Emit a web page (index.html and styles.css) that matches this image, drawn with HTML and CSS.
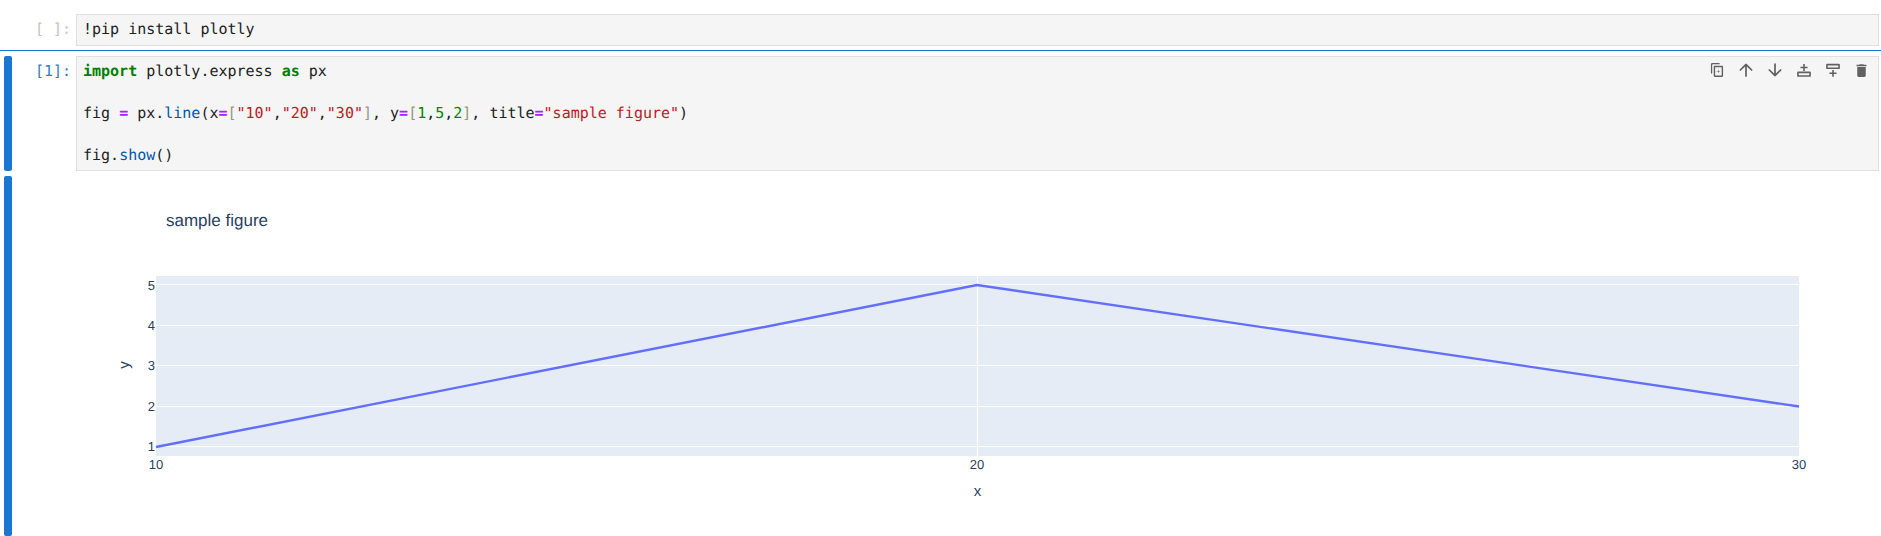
FILE: index.html
```html
<!DOCTYPE html>
<html lang="en">
<head>
    <meta charset="UTF-8">
    <title>Notebook</title>
    <link rel="stylesheet" href="styles.css">
</head>
<body>
    <div class="notebook">
        <div class="cell first-cell">
            <div class="collapser"></div>
            <div class="prompt">[ ]:</div>
            <div class="editor">
                <pre class="code">!pip install plotly</pre>
            </div>
        </div>

        <div class="cell active-cell">
            <div class="collapser on"></div>
            <div class="prompt">[1]:</div>
            <div class="editor">
                <pre class="code"><span class="kw">import</span> plotly.express <span class="kw">as</span> px

fig <span class="op">=</span> px.<span class="fn">line</span>(x<span class="op">=</span><span class="br">[</span><span class="str">"10"</span>,<span class="str">"20"</span>,<span class="str">"30"</span><span class="br">]</span>, y<span class="op">=</span><span class="br">[</span><span class="num">1</span>,<span class="num">5</span>,<span class="num">2</span><span class="br">]</span>, title<span class="op">=</span><span class="str">"sample figure"</span>)

fig.<span class="fn">show</span>()</pre>
                <div class="cell-toolbar">
                    <!-- duplicate -->
                    <span class="tool"><svg viewBox="0 0 14 14" width="16" height="16"><path fill-rule="evenodd" d="M2.8.875h6.1c.3 0 .55.26.55.59s-.25.59-.55.59H3.35c-.3 0-.55.26-.55.59v7.04c0 .32-.25.59-.55.59s-.56-.27-.56-.59V2.05C1.69 1.4 2.19.875 2.8.875ZM5.37 11.9V4.55h5.71v7.35H5.37ZM4.14 4.14c0-.45.37-.82.82-.82h6.53c.45 0 .82.37.82.82v8.17c0 .45-.37.82-.82.82H4.96c-.45 0-.82-.37-.82-.82V4.14Z"/><path d="M9.44 8.27H8.36v1.07c0 .12-.09.21-.21.21s-.21-.09-.21-.21V8.27H6.86c-.11 0-.21-.1-.21-.22s.1-.21.21-.21h1.08V6.77c0-.12.09-.22.21-.22s.21.1.21.22v1.07h1.08c.11 0 .21.09.21.21s-.1.22-.21.22Z"/></svg></span>
                    <!-- move up -->
                    <span class="tool"><svg viewBox="0 0 14 14" width="16" height="16"><path d="M1.53 6.47a.75.75 0 0 0 0 1.06.75.75 0 0 0 1.06 0L6.25 3.87v8.38a.75.75 0 0 0 1.5 0V3.87l3.65 3.66a.75.75 0 0 0 1.07 0 .75.75 0 0 0 0-1.06L7.71 1.71a1 1 0 0 0-1.42 0L1.53 6.47Z"/></svg></span>
                    <!-- move down -->
                    <span class="tool"><svg viewBox="0 0 14 14" width="16" height="16"><path d="M12.47 7.53a.75.75 0 0 0 0-1.06.75.75 0 0 0-1.06 0L7.75 10.13V1.75a.75.75 0 0 0-1.5 0v8.38L2.6 6.47a.75.75 0 0 0-1.07 0 .75.75 0 0 0 0 1.06l4.76 4.76a1 1 0 0 0 1.42 0l4.76-4.76Z"/></svg></span>
                    <!-- insert above -->
                    <span class="tool"><svg viewBox="0 0 14 14" width="16" height="16"><path fill-rule="evenodd" d="M6.3 1.8h1.4v2.300h2.400v1.400H7.700v2.300H6.300V5.500H3.900V4.100h2.400ZM1.800 8.400h10.400a.8.8 0 0 1 .8.8v3a.8.8 0 0 1-.8.8H1.800a.8.8 0 0 1-.8-.8v-3a.8.8 0 0 1 .8-.8Zm.6 1.400v1.800h9.200V9.800Z"/></svg></span>
                    <!-- insert below -->
                    <span class="tool"><svg viewBox="0 0 14 14" width="16" height="16"><path fill-rule="evenodd" d="M1.800 1.600h10.400a.8.8 0 0 1 .8.8v3a.8.8 0 0 1-.8.8H1.800a.8.8 0 0 1-.8-.8v-3a.8.8 0 0 1 .8-.8Zm.6 1.400v1.800h9.200V3ZM6.300 7h1.400v2.100h2.400v1.400H7.700v2.300H6.300v-2.300H3.900V9.100h2.400Z"/></svg></span>
                    <!-- delete -->
                    <span class="tool"><svg viewBox="0 0 24 24" width="17" height="17"><path d="M19 4h-3.500l-1-1h-5l-1 1H5v2h14V4ZM6 19a2 2 0 0 0 2 2h8a2 2 0 0 0 2-2V7H6v12Z"/></svg></span>
                </div>
            </div>
        </div>

        <div class="cell output-cell">
            <div class="collapser on"></div>
            <div class="output">
                <!-- viewBox uses page coordinates so the numbers read off the screen directly -->
                <svg class="chart" viewBox="76 176 1805 360" width="1805" height="360">
                    <rect class="plot-bg" x="156" y="276" width="1643" height="180"/>
                    <path class="grid" d="M156 284.500H1799M156 325.500H1799M156 365.500H1799M156 406.500H1799M156 446.500H1799M977.500 276V456"/>
                    <polyline class="trace" points="156,447 977,285 1799,406.500"/>
                    <text class="title" x="166" y="226">sample figure</text>
                    <g class="ytick">
                        <text x="155" y="289.500">5</text>
                        <text x="155" y="330">4</text>
                        <text x="155" y="370">3</text>
                        <text x="155" y="411">2</text>
                        <text x="155" y="451">1</text>
                    </g>
                    <g class="xtick">
                        <text x="156" y="469">10</text>
                        <text x="977" y="469">20</text>
                        <text x="1799" y="469">30</text>
                    </g>
                    <text class="axis-title" x="977.500" y="496">x</text>
                    <text class="axis-title" transform="translate(129 365) rotate(-90)">y</text>
                </svg>
            </div>
        </div>
    </div>
</body>
</html>
```

FILE: styles.css
```css
html, body {
    margin: 0;
    height: 100%;
    background: #ffffff;
    overflow: hidden;
    text-rendering: geometricPrecision; /* softer glyphs, closer to the reference */
}

.notebook {
    display: flex;
    flex-direction: column;
    height: 536px;
    padding-right: 2px;
    box-sizing: border-box;
}

/* --- Cells --- */
.cell {
    display: flex;
    align-items: stretch;
}

.first-cell {
    padding: 14px 0 4px;
}

.first-cell .editor {
    padding-bottom: 5px;
}

.active-cell {
    /* the blue rule runs the full width of the window */
    margin-right: -2px;
    padding: 5px 2px 5px 0;
    border-top: 1px solid #1976d2;
}

.output-cell {
    flex: 1;
    min-height: 0;
}

.collapser {
    flex: none;
    width: 8px;
    margin-left: 4px;
    border-radius: 2px;
}

.collapser.on {
    background: #1976d2;
}

.prompt {
    flex: none;
    width: 59px;
    padding: 5px 5px 0 0;
    text-align: right;
    font: 15px/21px "DejaVu Sans Mono", monospace;
    color: #c4c4c4;
}

.active-cell .prompt {
    color: #307fc1;
}

/* --- Editor --- */
.editor {
    position: relative;
    flex: 1;
    min-width: 0;
    padding: 4px 6px;
    background: #f5f5f5;
    border: 1px solid #e0e0e0;
}

.code {
    margin: 0;
    font: 15px/21px "DejaVu Sans Mono", monospace;
    color: #212121;
}

.kw { color: #008000; font-weight: bold; }
.op { color: #aa22ff; font-weight: bold; }
.fn { color: #0055aa; }
.str { color: #ba2121; }
.num { color: #008800; }
.br { color: #999977; }

.cell-toolbar {
    position: absolute;
    top: 4px;
    right: 2px;
    display: flex;
}

.tool {
    display: flex;
    justify-content: center;
    align-items: center;
    width: 29px;
    height: 18px;
}

.tool svg {
    fill: #616161;
}

/* --- Plot output --- */
.output {
    flex: 1;
    min-width: 0;
    margin-left: 64px;
}

.chart {
    display: block;
    font-family: "Liberation Sans", Arial, sans-serif;
    fill: #2a3f5f;
}

.plot-bg {
    fill: #e5ecf6;
}

.grid {
    fill: none;
    stroke: #ffffff;
    stroke-width: 1.200;
}

.trace {
    fill: none;
    stroke: #636efa;
    stroke-width: 2.400;
}

.title {
    font-size: 17px;
}

.ytick text {
    font-size: 13px;
    text-anchor: end;
}

.xtick text {
    font-size: 13px;
    text-anchor: middle;
}

.axis-title {
    font-size: 15px;
    text-anchor: middle;
}
```
